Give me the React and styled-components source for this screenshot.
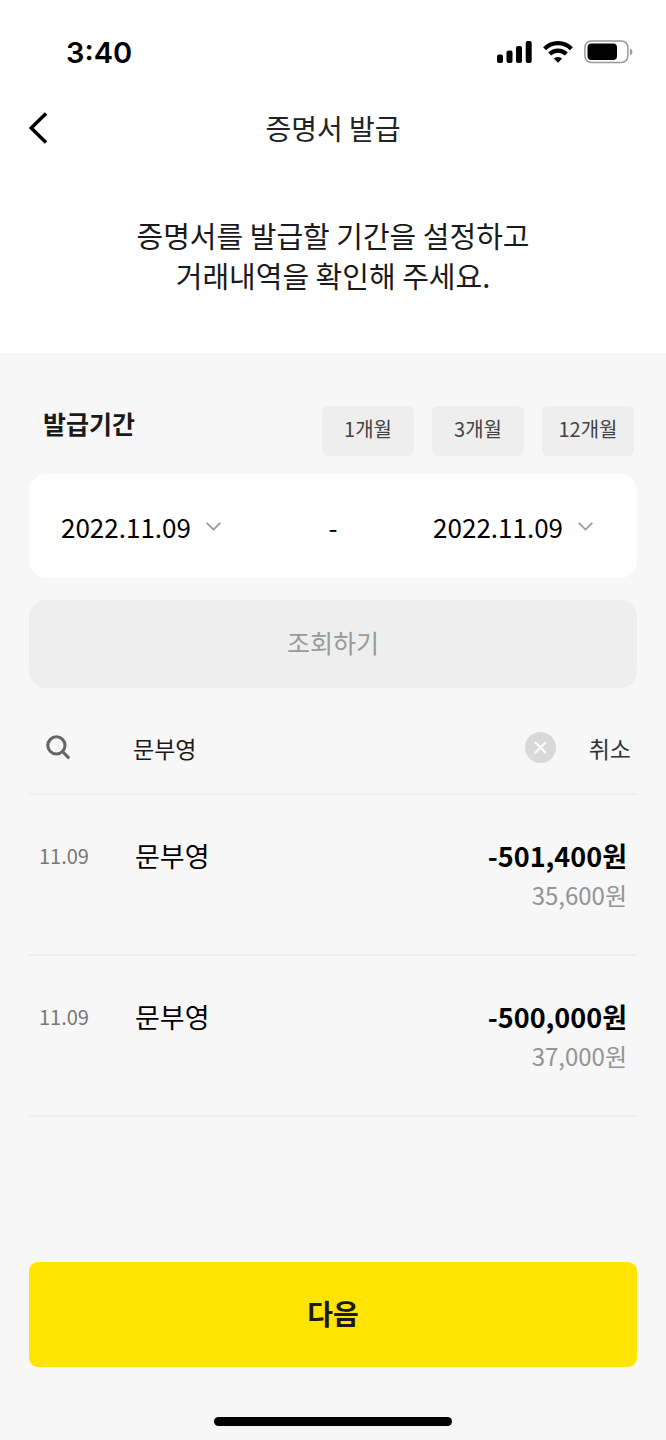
import { useState } from 'react';
import styled, { createGlobalStyle } from 'styled-components';

const GlobalStyles = createGlobalStyle`
  * {
    box-sizing: border-box;
  }
  body {
    margin: 0;
    background-color: #f7f7f7;
    font-family: 'Noto Sans CJK KR', sans-serif;
    color: #1a1a1a;
  }
  button, input {
    font-family: inherit;
    color: inherit;
    padding: 0;
    border: none;
    background: none;
  }
  button {
    cursor: pointer;
  }
  svg {
    display: block;
  }
`;

const PageStyles = styled.div`
  display: flex;
  flex-direction: column;
  min-height: 100vh;
`;

const HeaderStyles = styled.header`
  background-color: #fff;
  padding-bottom: 58px;
`;

const StatusBarStyles = styled.div`
  display: flex;
  align-items: center;
  justify-content: space-between;
  height: 104px;
  padding: 0 33px 0 66px;
`;

const TimeStyles = styled.span`
  font-family: Inter, sans-serif;
  font-size: 29px;
  font-weight: 600;
  color: #000;
`;

const StatusIconsStyles = styled.div`
  display: flex;
  align-items: center;
  gap: 11px;
`;

const NavStyles = styled.nav`
  display: grid;
  grid-template-columns: 1fr auto 1fr;
  align-items: center;
  height: 48px;
  padding: 0 28px;
`;

const TitleStyles = styled.h1`
  margin: 0;
  font-size: 28px;
  font-weight: 400;
  line-height: 46px;
  color: #222;
`;

const GuideStyles = styled.p`
  margin: 63px 0 0;
  text-align: center;
  font-size: 29px;
  line-height: 40px;
`;

const MainStyles = styled.main`
  display: flex;
  flex: 1;
  flex-direction: column;
  padding: 53px 29px 0;
`;

const PeriodStyles = styled.div`
  display: flex;
  align-items: flex-start;
  justify-content: space-between;
  padding: 0 3px 0 14px;
`;

const LabelStyles = styled.h2`
  margin: 0;
  font-size: 25px;
  font-weight: 700;
  line-height: 34px;
`;

const ChipsStyles = styled.div`
  display: flex;
  gap: 18px;
`;

const ChipStyles = styled.button`
  width: 92px;
  height: 50px;
  padding-bottom: 6px;
  border-radius: 6px;
  background-color: #eee;
  font-size: 20px;
  color: #444;
`;

const DateCardStyles = styled.div`
  display: flex;
  align-items: center;
  justify-content: space-between;
  height: 104px;
  margin-top: 18px;
  padding: 0 32px;
  border-radius: 17px;
  background-color: #fff;
  font-size: 26px;
  color: #000;
`;

const DateButtonStyles = styled.button`
  display: flex;
  align-items: center;
  gap: 15px;
  padding-right: 12px;
  font-size: 26px;
`;

const SubmitStyles = styled.button`
  height: ${({ $primary }) => ($primary ? '105px' : '88px')};
  margin-top: ${({ $primary }) => ($primary ? 'auto' : '22px')};
  padding-bottom: 4px;
  border-radius: ${({ $primary }) => ($primary ? '9px' : '17px')};
  background-color: ${({ $primary }) => ($primary ? '#ffe500' : '#eee')};
  font-size: ${({ $primary }) => ($primary ? '28px' : '25px')};
  font-weight: ${({ $primary }) => ($primary ? 700 : 400)};
  color: ${({ $primary }) => ($primary ? '#1a1a1a' : '#999')};
`;

const SearchStyles = styled.form`
  display: flex;
  align-items: center;
  height: 107px;
  padding: 14px 6px 0 17px;
  border-bottom: 2px solid #efefef;
`;

const SearchInputStyles = styled.input`
  flex: 1;
  min-width: 0;
  margin-left: 62px;
  outline: none;
  font-size: 23px;
`;

const ClearStyles = styled.button`
  display: flex;
  align-items: center;
  justify-content: center;
  width: 31px;
  height: 31px;
  border-radius: 50%;
  background-color: #d9d9d9;
`;

const CancelStyles = styled.button`
  margin-left: 33px;
  font-size: 23px;
  color: #333;
`;

const ListStyles = styled.ul`
  margin: 0;
  padding: 0;
  list-style: none;
`;

const ItemStyles = styled.li`
  display: grid;
  grid-template-columns: 96px 1fr auto;
  height: 161px;
  padding: 41px 10px 0;
  border-bottom: 2px solid #efefef;
  line-height: 40px;
`;

const DayStyles = styled.time`
  font-size: 20px;
  color: #777;
`;

const NameStyles = styled.span`
  font-size: 27px;
  color: #000;
`;

const AmountsStyles = styled.div`
  text-align: right;
`;

const AmountStyles = styled.div`
  font-size: 27px;
  font-weight: 700;
  color: #000;
`;

const BalanceStyles = styled.div`
  font-size: 24px;
  line-height: 38px;
  color: #949494;
`;

const FooterStyles = styled.footer`
  display: flex;
  justify-content: center;
  padding: 50px 0 14px;
`;

const HomeBarStyles = styled.div`
  width: 238px;
  height: 9px;
  border-radius: 5px;
  background-color: #000;
`;

const SignalIcon = () => (
  <svg width="35" height="22" viewBox="0 0 35 22" aria-hidden="true">
    <rect x="0" y="13.5" width="6" height="8.5" rx="2" />
    <rect x="9.5" y="9.5" width="6" height="12.5" rx="2" />
    <rect x="19" y="5" width="6" height="17" rx="2" />
    <rect x="28.7" y="0" width="6" height="22" rx="2" />
  </svg>
);

const WifiIcon = () => (
  <svg width="30" height="22" viewBox="0 0 30 22" fill="none" stroke="#000" strokeWidth="4.2" aria-hidden="true">
    <path d="M1.6 7.7A19 19 0 0 1 28.4 7.7" />
    <path d="M6.7 13A11.8 11.8 0 0 1 23.3 13" />
    <path d="M15 21.8 10.8 17.6A6 6 0 0 1 19.2 17.6Z" fill="#000" stroke="none" />
  </svg>
);

const BatteryIcon = () => (
  <svg width="49" height="24" viewBox="0 0 49 24" aria-hidden="true">
    <rect x="0.9" y="1" width="43" height="21.5" rx="6.5" fill="none" stroke="#999" strokeWidth="1.5" />
    <rect x="3.5" y="3.6" width="29.5" height="16.3" rx="4" />
    <path d="M46 8.5C49.2 9.7 49.2 14 46 15.2Z" fill="#999" />
  </svg>
);

const BackIcon = () => (
  <svg width="20" height="32" viewBox="0 0 20 32" fill="none" stroke="#000" strokeWidth="3.4" aria-hidden="true">
    <path d="M18 1.5 3.2 16 18 30.5" />
  </svg>
);

const ChevronIcon = () => (
  <svg width="15" height="9" viewBox="0 0 15 9" fill="none" stroke="#999" strokeWidth="1.8" aria-hidden="true">
    <path d="M0.7 0.8 7.5 7.6 14.3 0.8" />
  </svg>
);

const SearchIcon = () => (
  <svg width="25" height="25" viewBox="0 0 25 25" fill="none" stroke="#666" strokeWidth="3.1" aria-hidden="true">
    <circle cx="10.4" cy="10.4" r="8.6" />
    <path d="M16.5 16.5 23.2 23.4" />
  </svg>
);

const CloseIcon = () => (
  <svg width="13" height="13" viewBox="0 0 13 13" fill="none" stroke="#fff" strokeWidth="2" aria-hidden="true">
    <path d="M1 1 12 12M12 1 1 12" />
  </svg>
);

const months = [1, 3, 12];

const transactions = [
  { id: 1, day: '11.09', name: '문부영', amount: -501400, balance: 35600 },
  { id: 2, day: '11.09', name: '문부영', amount: -500000, balance: 37000 },
];

const formatWon = (value) => `${value.toLocaleString('en-US')}원`;

const App = () => {
  const [keyword, setKeyword] = useState('문부영');
  const items = transactions.filter((item) => item.name.includes(keyword));

  return (
    <PageStyles>
      <GlobalStyles />
      <HeaderStyles>
        <StatusBarStyles>
          <TimeStyles>3:40</TimeStyles>
          <StatusIconsStyles>
            <SignalIcon />
            <WifiIcon />
            <BatteryIcon />
          </StatusIconsStyles>
        </StatusBarStyles>
        <NavStyles>
          <button type="button" aria-label="뒤로">
            <BackIcon />
          </button>
          <TitleStyles>증명서 발급</TitleStyles>
        </NavStyles>
        <GuideStyles>
          증명서를 발급할 기간을 설정하고
          <br />
          거래내역을 확인해 주세요.
        </GuideStyles>
      </HeaderStyles>

      <MainStyles>
        <PeriodStyles>
          <LabelStyles>발급기간</LabelStyles>
          <ChipsStyles>
            {months.map((month) => (
              <ChipStyles key={month} type="button">{`${month}개월`}</ChipStyles>
            ))}
          </ChipsStyles>
        </PeriodStyles>

        <DateCardStyles>
          <DateButtonStyles type="button" aria-label="시작일 2022.11.09">
            2022.11.09
            <ChevronIcon />
          </DateButtonStyles>
          <span>-</span>
          <DateButtonStyles type="button" aria-label="종료일 2022.11.09">
            2022.11.09
            <ChevronIcon />
          </DateButtonStyles>
        </DateCardStyles>

        <SubmitStyles type="button" disabled>조회하기</SubmitStyles>

        <SearchStyles onSubmit={(e) => e.preventDefault()}>
          <SearchIcon />
          <SearchInputStyles
            type="text"
            aria-label="검색어"
            value={keyword}
            onChange={(e) => setKeyword(e.target.value)}
          />
          <ClearStyles type="button" aria-label="지우기" onClick={() => setKeyword('')}>
            <CloseIcon />
          </ClearStyles>
          <CancelStyles type="button">취소</CancelStyles>
        </SearchStyles>

        <ListStyles>
          {items.map((item) => (
            <ItemStyles key={item.id}>
              <DayStyles>{item.day}</DayStyles>
              <NameStyles>{item.name}</NameStyles>
              <AmountsStyles>
                <AmountStyles>{formatWon(item.amount)}</AmountStyles>
                <BalanceStyles>{formatWon(item.balance)}</BalanceStyles>
              </AmountsStyles>
            </ItemStyles>
          ))}
        </ListStyles>

        <SubmitStyles type="button" $primary>다음</SubmitStyles>
      </MainStyles>

      <FooterStyles>
        <HomeBarStyles />
      </FooterStyles>
    </PageStyles>
  );
};

export default App;
